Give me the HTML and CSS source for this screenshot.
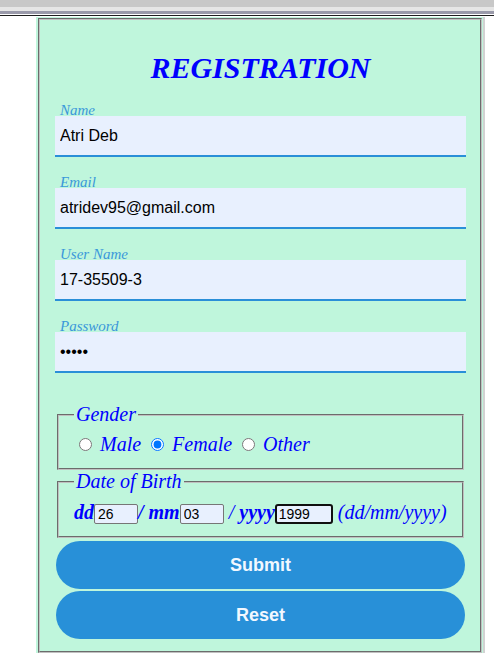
FILE: index.html
```html
<!DOCTYPE html>
<html>
<head>
<meta charset="utf-8">
<link rel="stylesheet" href="styles.css">
</head>
<body>
<div class="bars">
  <div class="bar bar-a"></div>
  <div class="bar bar-b"></div>
  <div class="bar bar-c"></div>
  <div class="bar bar-d"></div>
  <div class="bar bar-e"></div>
</div>
<div class="wrap">
  <form class="card">
    <fieldset class="outer">
      <h1 class="title">REGISTRATION</h1>
      <div class="field">
        <label class="field-label">Name</label>
        <input class="field-input" type="text" value="Atri Deb">
      </div>
      <div class="field">
        <label class="field-label">Email</label>
        <input class="field-input" type="text" value="atridev95@gmail.com">
      </div>
      <div class="field">
        <label class="field-label">User Name</label>
        <input class="field-input" type="text" value="17-35509-3">
      </div>
      <div class="field">
        <label class="field-label">Password</label>
        <input class="field-input" type="password" value="abcde">
      </div>
      <fieldset class="group gender">
        <legend class="group-legend">Gender</legend>
        <input type="radio" name="g"> Male <input type="radio" name="g" checked> Female <input type="radio" name="g"> Other
      </fieldset>
      <fieldset class="group dob">
        <legend class="group-legend">Date of Birth</legend>
        <b>dd</b><input class="date-input" type="text" value="26"><b>/</b> <b>mm</b><input class="date-input" type="text" value="03"> / <b>yyyy</b><input class="date-input year focused" type="text" value="1999"> (dd/mm/yyyy)
      </fieldset>
      <div class="actions">
        <button class="btn" type="button">Submit</button>
        <button class="btn" type="button">Reset</button>
      </div>
    </fieldset>
  </form>
</div>
</body>
</html>
```

FILE: styles.css
```css
html, body {
  margin: 0;
  padding: 0;
  background: #ffffff;
}

.bars {
  display: flex;
  flex-direction: column;
}
.bar { width: 100%; }
.bar-a { height: 7px; background: #c8c8c8; }
.bar-b { height: 4px; background: #e6e6e6; }
.bar-c { height: 3px; background: #9a9aaa; }
.bar-d { height: 1px; background: #ffffff; }
.bar-e { height: 1px; background: #1e1e1e; }

.wrap {
  margin: 1px 0 0 36px;
  width: 447px;
  padding-top: 1px;
  background: #bff6dc;
  box-shadow: 2px 0 0 #d2d2d2;
}

.card {
  margin: 0;
}

.outer {
  margin: 0 1px 0 2px;
  padding: 0 14px 12px 15px;
  border: 2px groove #c0c0c0;
  font-family: "Liberation Serif", serif;
  font-size: 20px;
  font-style: italic;
  color: #0000ff;
}

.title {
  margin: 31px 0 19px;
  font-size: 30px;
  line-height: 34px;
  font-weight: bold;
  font-style: italic;
  text-align: center;
  color: #0000ff;
}

.field {
  display: flex;
  flex-direction: column;
}
.field + .field {
  margin-top: 19px;
}

.field-label {
  display: block;
  padding-left: 5px;
  font-size: 15px;
  line-height: 12px;
  font-style: italic;
  color: #3a98da;
}

.field-input {
  box-sizing: border-box;
  width: 100%;
  height: 41px;
  margin: 0;
  padding: 0 5px;
  border: none;
  border-bottom: 2px solid #2a8fd8;
  background: #e8f0fe;
  font-family: "Liberation Sans", Arial, sans-serif;
  font-size: 16px;
  color: #000000;
  outline: none;
}

.group {
  margin: 0 2px;
  padding: 7px 15px 12px;
  border: 2px groove #c0c0c0;
}
.gender {
  margin-top: 30px;
}
.dob {
  white-space: nowrap;
  padding-top: 8px;
  padding-bottom: 12px;
}

.group-legend {
  padding: 0 2px;
  font-size: 20px;
}

.group b {
  font-weight: bold;
}

.date-input {
  box-sizing: border-box;
  width: 44px;
  height: 20px;
  margin: 0;
  padding: 1px 3px;
  border: 1px solid #767676;
  border-radius: 2px;
  background: #e8f0fe;
  font-family: "Liberation Sans", Arial, sans-serif;
  font-size: 14px;
  font-style: normal;
  color: #000000;
  vertical-align: baseline;
}
.date-input.year {
  width: 58px;
}
.date-input.focused {
  border: 2px solid #101010;
  border-radius: 3px;
  padding: 0 2px;
  outline: none;
}

.actions {
  display: flex;
  flex-direction: column;
  gap: 2px;
  margin-top: 3px;
  padding: 0 1px;
}

.btn {
  box-sizing: border-box;
  width: 100%;
  height: 48px;
  margin: 0;
  border: none;
  border-radius: 24px;
  background: #2890d8;
  color: #f2f8ff;
  font-family: "Liberation Sans", Arial, sans-serif;
  font-size: 18px;
  font-weight: bold;
  font-style: normal;
}
```
